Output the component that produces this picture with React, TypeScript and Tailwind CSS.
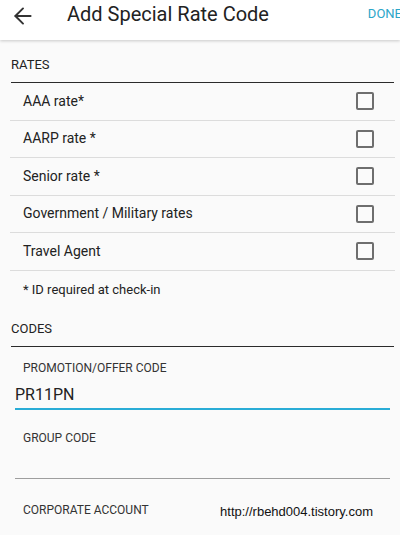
import { ArrowLeft } from "lucide-react";

const RATES = [
  "AAA rate*",
  "AARP rate *",
  "Senior rate *",
  "Government / Military rates",
  "Travel Agent",
];

function SectionLabel({ children }: { children: string }) {
  return (
    <div className="ml-[11px] mr-[6px] border-b-[1.5px] border-[#2b2b2b] pt-[17px] pb-[9px] text-[13px] leading-[16px] text-[#222]">
      {children}
    </div>
  );
}

function Checkbox() {
  return <span className="block h-[18px] w-[18px] rounded-[2px] border-2 border-[#6e6e6e]" />;
}

export default function App() {
  return (
    <div className="h-[535px] w-[400px] overflow-hidden bg-[#fafafa] font-['Roboto',sans-serif]">
      {/* Toolbar */}
      <header className="relative z-10 flex h-[40px] items-start bg-white pt-[3px] shadow-[0_1px_3px_rgba(0,0,0,0.2)]">
        <ArrowLeft size={26} strokeWidth={1.8} className="ml-[10px] text-[#333]" />
        <h1 className="ml-[31px] whitespace-nowrap text-[20px] leading-[22px] text-[#222]">
          Add Special Rate Code
        </h1>
        <span className="ml-auto mr-[-2px] pt-[3px] text-[13px] leading-[16px] text-[#2ba6c9]">
          DONE
        </span>
      </header>

      <SectionLabel>RATES</SectionLabel>

      <ul className="ml-[10px] mr-[5px]">
        {RATES.map((rate) => (
          <li
            key={rate}
            className="flex h-[37.5px] items-center justify-between border-b border-[#dcdcdc] pl-[13px] pr-[21px] text-[14px] text-[#222]"
          >
            <span>{rate}</span>
            <Checkbox />
          </li>
        ))}
      </ul>

      <p className="pl-[23px] pt-[11px] text-[13px] leading-[16px] text-[#222]">* ID required at check-in</p>

      <div className="pt-[6px]">
        <SectionLabel>CODES</SectionLabel>
      </div>

      {/* Code fields */}
      <div className="mx-[15px] w-[375px]">
        <div className="pl-[8px] pt-[14px] text-[12px] leading-[14px] text-[#333]">PROMOTION/OFFER CODE</div>
        <div className="mt-[9px] border-b-2 border-[#29acd6] pb-[3px] text-[16px] leading-[21px] text-[#222]">
          PR11PN
        </div>

        <div className="pl-[8px] pt-[21px] text-[12px] leading-[14px] text-[#333]">GROUP CODE</div>
        <div className="h-[34px] border-b border-[#9e9e9e]" />

        <div className="flex items-center pt-[20px]">
          <span className="pl-[8px] text-[12px] leading-[14px] text-[#333]">CORPORATE ACCOUNT</span>
          <span className="ml-auto mr-[17px] mt-[3px] font-['Liberation_Sans',sans-serif] text-[13px] text-[#111]">
            http://rbehd004.tistory.com
          </span>
        </div>
      </div>
    </div>
  );
}
